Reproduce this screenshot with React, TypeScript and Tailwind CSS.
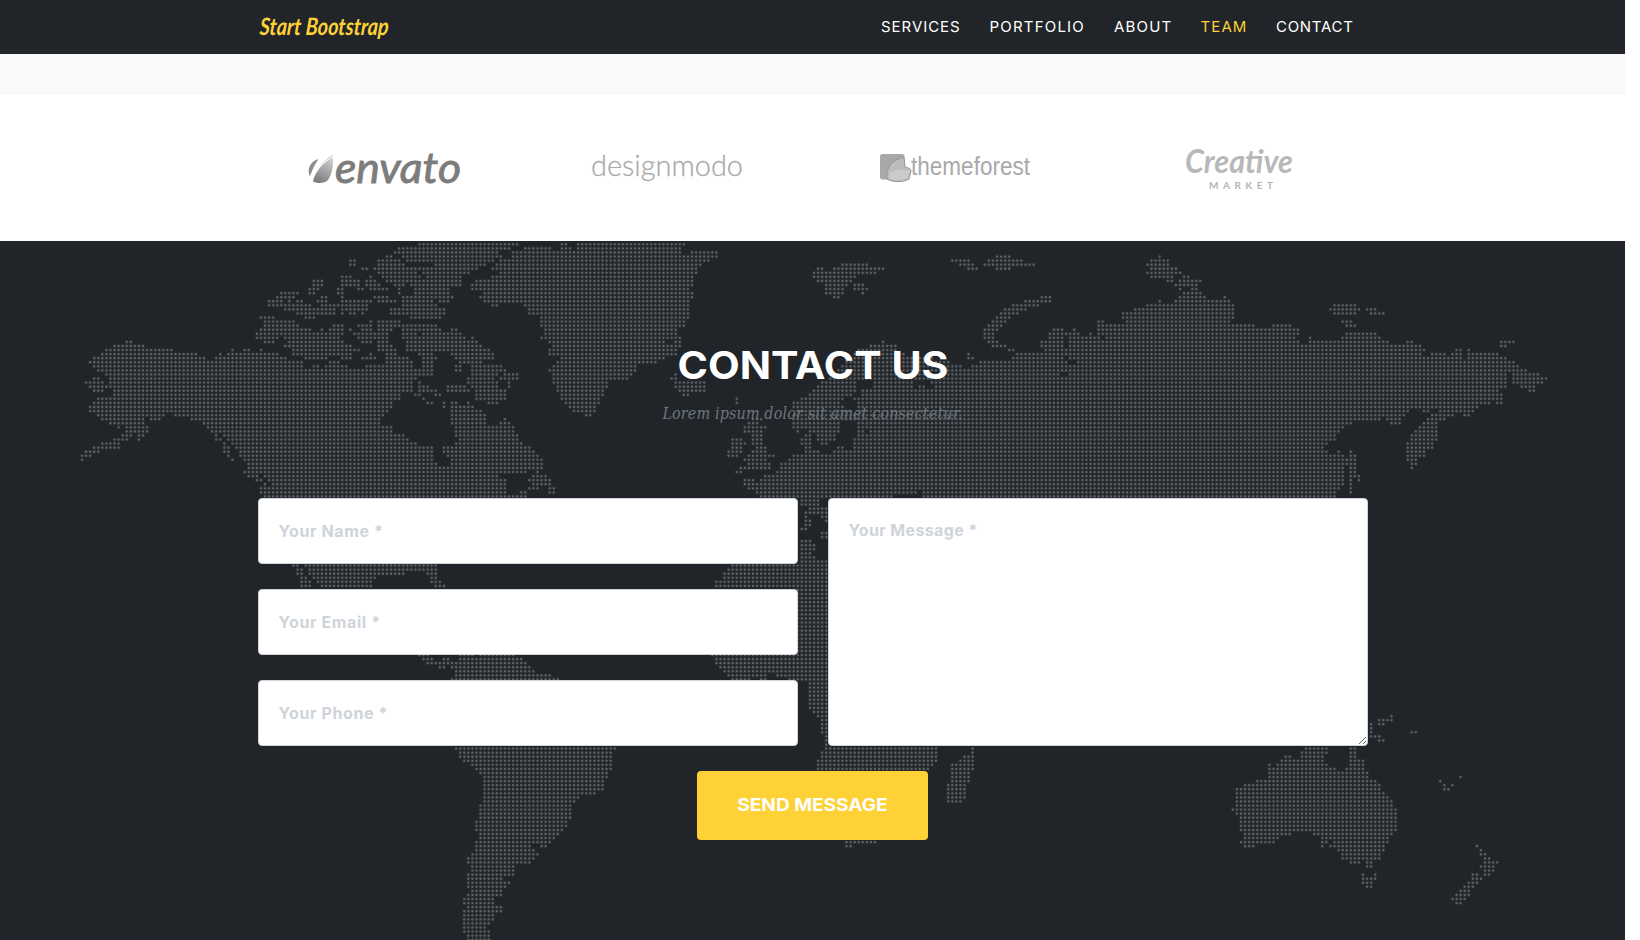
import React from "react";

/* Dotted world map: each region lists "row start-end start-end ..." in thirds of a pixel from its left edge. */
const PITCH = 61 / 15;
const REGIONS: { left: number; rows: string }[] = [
  {
    left: 60,
    rows: `0 1078-1375;1 1015-1350;2 1003-1315;3 978-990 1027-1325;4 871-883 954-1015 1040-1300;5 871-883 954-1030 1125-1275
6 907-919 944-1250;7 954-1070 1090-1230;8 846-871 932 966-1080 1100-1205;9 761-785 846-895 920-944 980-1205
10 761-785 846-895 920-960 1005-1030 1060-1205;11 749-773 834-846 895-907 932-980 1017 1065-1165
12 663-712 749-761 834-846 1017 1065-1165;13 651-700 785-797 846 944-980 1027-1175
14 627-663 688 712-724 773-797 846-930 954-1010 1027-1115 1140-1165;15 627-700 712-749 785-835 846-915 1027-1100 1115-1130
16 675-749 761-822 846-920 993-1150;17 712-822 846 871-883 907 993-1150;18 602-640 737-761 1054-1140
19 614-700 932 956-1020;20 614-712 822-846 895-932 956-1020 1027-1130;21 602-749 785 810-846 871 907-932 956-990 1027-1140 1175-1187
22 590-749 761-846 883-980 1027-1070 1090-1205;23 590-651 675-834 895-944 956-975 1027-1215 1236
24 200-212 614-640 688-846 907-930 956-980 1040-1248;25 163-248 675-871 956-990 1040-1260
26 139-335 517 553-565 602 700-895 956-1005 1040-1150 1170-1285;27 127-410 480 505-650 700-871 932 980-1005 1075-1115 1175-1295
28 102-432 468-675 737-797 846-871 907-944 980-1045 1088-1125 1187-1295;29 90-445 456-725 810-834 980-1055 1088-1115 1200-1260
30 102-725 761-773 797-860 920-940 956-1055 1088-1115 1187-1200 1236-1325;31 114-1070 1080-1115 1187-1200 1236-1335
32 139-1070 1080-1115 1236-1312 1335-1372;33 102-114 150-1070 1225-1300 1322-1372;34 78-130 150-1057 1078 1225-1285 1300-1312 1345
35 90-1057 1078-1103 1163-1210 1236-1312 1345;36 102-127 163-1057 1078-1130 1163-1230 1248-1335
37 163-1020 1066-1078 1127-1140 1248-1335;38 114-1020 1090 1248-1335;39 102-995 1103-1115 1151 1175-1187 1225 1285-1310
40 90-995 1151 1175-1240;41 90-980 1175-1262;42 114-310 345-970 1175-1275;43 127-248 272-300 395-960 1175-1275 1335
44 151-248 432-960 1175-1275 1322-1350;45 175 200-262 444-990 1187-1360;46 200-262 456-990 1187-1360
47 187-210 236-248 468 493-1030 1187-1372;48 163-205 236 468-480 505-1045 1200-1372;49 127-180 493 517-1070 1187-1385
50 102-180 493-505 529-1115 1151-1410;51 78-115 493-505 541-1115 1151-1420;52 66-90 505 541-1115 1163-1435
53 66 517 553-1115 1175-1445;54 565-1127 1175-1445;55 565-1140 1151 1163-1445;56 553-1400 1432;57 565-590 614-1312 1420-1457
58 590-602 626-1335 1410-1470;59 614 638-1335 1420-1470;60 602-1335 1408-1432 1470-1480;61 602-1335 1385-1397 1470-1480;62 614-1335 1350-1397
79 697-716 733-1131;80 709-724 747-1131;81 709-721 747-1034 1103-1131;82 724-735 758-945 1114-1131;83 721-749 773-936 1114-1143
84 721-749 785-936 1128-1154;101 1076-1103 1200-1235 1258-1361;102 1091-1114 1148-1166 1200-1387;103 1103-1166 1177-1395
104 1137-1151 1175-1409;105 1186-1421;106 1186-1470;107 1175-1495`,
  },
  {
    left: 400,
    rows: `0 482-495 530-850;1 370-455 482-510 530-845;2 345-845 873-955;3 345-865 873-945;4 300-930;5 285-905;6 275-890;7 297-885;8 275-870
9 225-870;10 213-870;11 213-865;12 250-880;13 238-880;14 250-865;15 275-290 370-865;16 382-865;17 385-865;18 420-865;19 420-855
20 420-850;21 433-832;22 433-832;23 420-432 445-835;24 445-795 830-840;25 457-800 820-840;26 445-830;27 445-830;28 480-795
29 470-770;30 457-710;31 445-700;32 457-690 825;33 457-640 650-675 813-830;34 457-625 825-915;35 470-625 825-915;36 470-612 837-915
37 480-610 850-865;38 482-600 1010;39 495-590 1010;40 505-585;41 518-585;42 555-575;43 1058-1085;44 1045-1070;45 1033-1097
46 1033-1085;47 1058-1085;48 997-1020 1058-1085;49 997-1033 1058-1085;50 997-1020 1070-1097;51 985-1020 1058-1097;52 985-1010 1045-1120
53 1033-1097 1170-1200;54 1045-1110 1160-1200;55 1020-1110 1140-1200;56 1010-1020 1130-1200;57 1095-1200;58 1033-1058 1085-1200
59 1033-1200;60 1045-1200;61 1070-1200;62 1082-1200`,
  },
  {
    left: 780,
    rows: `3 650-690 1138;4 517-567 625-730 1113-1163;5 185-265 540-580 612-765 1100-1163;6 110-125 160-310 565-590 650-690 1113-1187
7 98-290 1100-1200;8 98-230 1113-1175 1210-1225;9 112-215 1163-1175 1200-1262;10 137-200 220-250 1187-1250;11 137-190 220-262 1200 1236-1250
12 137-190 248 1212-1262;13 160-175 785-812 1200-1275 1335;14 737-812 1138 1187-1350;15 700-775 1100-1350;16 675-740 1065-1350
17 663-712 1030-1350;18 650-690 1030-1350;19 638-678 956-968 1040-1350;20 626-665 956-1350;21 614-655 820-850 883 956-1350
22 614-640 808-860 871-895 932 956-1350;23 614-640 808-850 871-956 980-1350;24 310 626-655 785-850 871-1350
25 272-350 638-680 785-850 871-1350;26 235-350 688-700 797-1350;27 220-370 565 710-860 871-905 920-1350;28 210-450 565-577 700-850 871-1350
29 200-510 602-860 890-1350;30 190-545 577-865 883-1350;31 180-540 553-865 883-1350;32 160-840 870-1350;33 150-1350
34 125-230 280-400 460-1350;35 112-230 280-390 418-430 465-1350;36 100-230 250-1350;37 88-215 245-1350;38 63-185 220-1350
39 40-180 235-1350;40 40-185 235-1350;41 50-210 235-1350;42 40-230 240-1350;43 40-1350;44 40-180 235-1350;45 40-180 235-1350
46 50 88-180 235-245 270-1350;47 75-90 110-165 235-1350;48 63-90 112-165 225-1350;49 63-90 125-140 220-1350;50 75-90 175-190 220-1350
51 75-115 160-1350;52 40-1350;53 28-1350;54 0-1350;55 0-1350;56 0-1350;57 0-1350;58 0-1350;59 0-1350;60 0-1350;61 0-405 430-1350;62 0-335 430-1350
63 60-118;64 60-118;65 85-144;66 75-144;67 75 125-144;68 75-90 137;69 75-90;70 62-75;71 125-144;72 125-144;73 60-95;74 60-105;75 60-105;76 60-95;77 60-105
78 60-144;79 -147-144;80 -160-144;81 -171-144;82 -171-144;83 -194-144;84 -194-144;85 54-144;86 54-144;87 54-144;88 54-144;89 54-144;90 54-144
91 54-144;92 54-144;93 54-144;94 54-144;95 54-144;96 54-144;97 54-144;98 54-144;99 54-144;100 54-144;101 -206-144;102 -194-144;103 -194-144
104 -183-144;105 -171-144;106 -156--41 -13-144;107 -147--91 -53--41 27-144;108 85-144;109 85-144;110 85-144;111 85-144;112 85-144;113 85-144;114 85-144
115 100-144;116 110-144;117 125-144;118 125-144;119 125-144;120 125-144;121 137;122 137;123 137
124 137-470 577;125 125-470 577;126 125-470 553-577;127 112-470 541-577;128 112-460 517-577;129 112-445 517-577;130 517-567;131 517-567
132 517-567;133 505-555;134 505-555;135 505-555;136 505-555;137 505-541;147 200-290;148 200-212`,
  },
  {
    left: 1180,
    rows: `14 0-150;15 0-160 462-528;16 0-160 450-540 560-590;17 0-160 462-528 575-612;18 0-125 147-160;19 0-105 123-150 487-515
20 0-220 280-330 500-528;21 0-355;22 0-355 500-590;23 0-345 390 487-600;24 0-355 390-625 683-700 963-1003;25 0-725 963-975
26 0-735 830-842 867;27 0-725 755-797 818-842 867-955;28 0-840 867-980;29 0-1003;30 0-1015;31 0-1040;32 0-980 1000-1075;33 0-980 1000-1098
34 0-980 1000-1088;35 0-980 1025-1065;36 0-955 1050-1062;37 0-968;38 0-968;39 0-930 955-968;40 0-895;41 0-685 733-745 780-880
42 0-675 757-820 855-870;43 0-600 625-660 745-795;44 0-515 635-660 733-770;45 0-490 720-770;46 0-478 708-770;47 0-465 695-770
48 0-465 695-770;49 0-440 683-760;50 0-430 683-760;51 0-440 475 515 683-735;52 0-490 515-525 683-735;53 0-500 515-525 683-710
54 0-500 515-525 695-710;55 0-490 515-525 697;56 0-490 515-525;57 0-490 515-540;58 0-490 515 540;59 0-490 515;60 0-478 515;61 0-465 515;62 0-465
116 635;117 598-635;118 575 598-610;119 575;120 575 695-707;121 575-598;122 598-610
124 378-440 512-525;125 366-440 512-525;126 317-330 366-430 512-525;127 305-430 512-550;128 268 292-440 512-550;129 268-465 500-550
130 268-562;131 268-562 842;132 232-585 782;133 195-600 793 818;134 170-600 793-805;135 170-610;136 170-622;137 170-635;138 170-635
139 158-648;140 170-648;141 183-648;142 183-648;143 183-648;144 183-648;145 195-330 402-635;146 195-292 427-625;147 183-285 427-440 465-622
148 195-220 427 452-612 891;149 475-612 903;150 487-600 903-915;151 487-600 915-928;152 512-540 562-575 915-952;153 562-575 903-940
154 915-940;155 550 585 880-892 915-928;156 550-585 880-903;157 550-575 867-892;158 562-575 855-880;159 842-867;160 830-867;161 818-855;162 830-842`,
  },
  {
    left: 400,
    rows: `124 167-645;125 180-635;126 180-635;127 192-635;128 215-635;129 228-635;130 240-620;131 252-620;132 252-610;133 252-610;134 252-610
135 252-585;136 252-535;137 252-525;138 240-512;139 240-512;140 240-512;141 240-512;142 228-500;143 228-500;144 228-487;145 240-475
146 240-463;147 228-450;148 228-390 424-436;149 228-402;150 215-412;151 204-402;152 204-390;153 215-340;154 215-340;155 204-340
156 204-305;157 204-330;158 204-315;159 215-305;160 204-305;161 192-280;162 192-280;163 204-305;164 192-305;165 192-280;166 192-280
167 192-268;168 192-256;169 192-268;170 204-268;171 204-268`,
  },
];

function buildMap(): string {
  const dots = new Set<string>();
  for (const { left, rows } of REGIONS) {
    for (const line of rows.split(/[;\n]/)) {
      const [row, ...spans] = line.trim().split(" ");
      for (const span of spans) {
        const m = /^(-?\d+)(?:-(-?\d+))?$/.exec(span);
        if (!m) continue;
        const col = (v: number) => Math.round((left + v / 3 - 82) / PITCH);
        const from = col(Number(m[1]));
        const to = col(Number(m[2] ?? m[1]));
        for (let c = from; c <= to; c++) {
          dots.add(`M${(82 + c * PITCH).toFixed(2)} ${(3.33 + Number(row) * PITCH).toFixed(2)}h0`);
        }
      }
    }
  }
  return [...dots].join("");
}

const MAP_PATH = buildMap();

function WorldMap() {
  return (
    <svg className="absolute inset-0 h-full w-full" viewBox="0 0 1625 699" fill="none" strokeLinecap="round">
      <path d={MAP_PATH} stroke="#5b6062" strokeOpacity="0.2" strokeWidth="4" />
      <path d={MAP_PATH} stroke="#5f6365" strokeWidth="2.3" />
    </svg>
  );
}

const NAV = [
  { label: "SERVICES", box: "w-[79px] tracking-[0.95px]", active: false },
  { label: "PORTFOLIO", box: "w-[95px] tracking-[1.2px]", active: false },
  { label: "ABOUT", box: "w-[57px] tracking-[1.2px]", active: false },
  { label: "TEAM", box: "w-[46px] tracking-[1.1px]", active: true },
  { label: "CONTACT", box: "w-[78px] tracking-[0.7px]", active: false },
];

const SANS = "font-['Inter',sans-serif]";

function Navbar() {
  return (
    <nav className="flex h-[54px] items-center justify-between bg-[#212529] pl-[258px] pr-[271px]">
      <svg width="134" height="34" viewBox="0 0 134 34" className="overflow-visible">
        <text x="1" y="25.5" textLength="129" lengthAdjust="spacingAndGlyphs" transform="skewX(-4) translate(2 0)" className="fill-[#fed136] font-['Lato',sans-serif] text-[24px] font-bold italic">
          Start Bootstrap
        </text>
      </svg>
      <ul className="flex gap-[29.5px]">
        {NAV.map((n) => (
          <li key={n.label} className={n.box}>
            <a className={`block whitespace-nowrap text-[15px] leading-6 ${n.active ? "text-[#fed136]" : "text-white"}`}>{n.label}</a>
          </li>
        ))}
      </ul>
    </nav>
  );
}

function Clients() {
  return (
    <section className="grid h-[146px] grid-cols-4 items-center bg-white px-[242px]">
      <svg width="200" height="74" viewBox="0 -12 200 74" className="ml-[43px]">
        <defs>
          <linearGradient id="leaf" x1="0.7" y1="0" x2="0.4" y2="1">
            <stop offset="0" stopColor="#d8d8d8" />
            <stop offset="0.5" stopColor="#a8a8a8" />
            <stop offset="1" stopColor="#7d7d7d" />
          </linearGradient>
        </defs>
        <path d="M25 33.500C22 27 24 19 33.500 16C30 21 27 27 25 33.500Z" fill="#8d8d8d" />
        <path d="M47.500 11.500C49 22 47 31 43 37C39 41 32 40.500 28 38.500C29 30 37 19 47.500 11.500Z" fill="url(#leaf)" />
        <path d="M27 38C31 27 38 19 48 14" stroke="#fff" strokeWidth="1" fill="none" />
        <text x="50" y="39.500" textLength="126" lengthAdjust="spacingAndGlyphs" stroke="#7c7c7c" strokeWidth="0.9" className="fill-[#7c7c7c] font-['Lato',sans-serif] text-[43px] italic">
          envato
        </text>
      </svg>
      <svg width="200" height="74" viewBox="0 -12 200 74" className="ml-[43px]">
        <text x="21" y="32.500" textLength="152" lengthAdjust="spacingAndGlyphs" stroke="#aaaaaa" strokeWidth="0.3" className="fill-[#aaaaaa] font-['Lato',sans-serif] text-[30px] font-light">
          designmodo
        </text>
      </svg>
      <svg width="200" height="74" viewBox="0 -12 200 74" className="ml-[43px]">
        <rect x="24" y="11" width="24.500" height="25.500" rx="2.500" fill="#a8a8a8" />
        <path d="M31 36C29.500 25 36 16.500 48 14.500L49 24C52 25 55 25 55 28L53 36C47 39.500 37 39.500 31 36Z" fill="#bdbdbd" stroke="#979797" strokeWidth="1" />
        <path d="M33 35C32 29 38 26 47 27.500C51 28 54 26 54 28L52 35C45 38 37 38 33 35Z" fill="#cbcbcb" />
        <text x="55" y="32" textLength="119" lengthAdjust="spacingAndGlyphs" className="fill-[#a9a9a9] font-['Liberation_Sans',sans-serif] text-[25px]">
          themeforest
        </text>
      </svg>
      <svg width="200" height="74" viewBox="0 -12 200 74" className="ml-[43px]">
        <text x="44" y="30" textLength="108" lengthAdjust="spacingAndGlyphs" className="fill-[#b8b8b8] font-['Lato',sans-serif] text-[33px] font-bold italic">
          Creative
        </text>
        <text x="68" y="45.500" textLength="64" className="fill-[#b5b5b5] font-['Lato',sans-serif] text-[10px] font-bold">
          MARKET
        </text>
      </svg>
    </section>
  );
}

const FIELD =
  "block w-full rounded border border-[#ced4da] bg-white px-5 text-[16px] font-bold text-[#495057] outline-none placeholder:text-[#ced4da] placeholder:opacity-100";

function Contact() {
  return (
    <section className="relative h-[699px] overflow-hidden bg-[#212529]">
      <WorldMap />
      <div className="relative mx-auto w-[1110px] pt-[94px]">
        <header className="text-center">
          <h2 className="scale-x-[1.068] text-[38.5px] font-bold leading-[60px] text-white">CONTACT US</h2>
          <p className="mt-[7px] font-['DejaVu_Serif',serif] text-[16px] italic leading-6 tracking-[0.12px] text-[#6c757d] [font-stretch:condensed]">
            Lorem ipsum dolor sit amet consectetur.
          </p>
        </header>
        <form className="mt-[72px]">
          <div className="grid grid-cols-2 gap-[30px]">
            <div className="flex flex-col gap-[25px]">
              <input className={`${FIELD} h-[66px] tracking-[0.6px]`} placeholder="Your Name *" />
              <input className={`${FIELD} h-[66px] tracking-[0.6px]`} placeholder="Your Email *" />
              <input className={`${FIELD} h-[66px] tracking-[0.6px]`} placeholder="Your Phone *" />
            </div>
            <textarea className={`${FIELD} h-[248px] pb-5 pt-[19px] leading-6 tracking-[0.35px]`} placeholder="Your Message *" />
          </div>
          <button type="button" className="mx-auto mt-[25px] block h-[69px] w-[231px] rounded bg-[#fed136] text-[17.6px] font-bold text-white">
            <span className="block scale-x-[1.085]">SEND MESSAGE</span>
          </button>
        </form>
      </div>
    </section>
  );
}

export default function App() {
  return (
    <div className={`h-[940px] overflow-hidden bg-white pr-[15px] ${SANS}`}>
      <Navbar />
      <div className="h-[41px] bg-[#f8f9fb]" />
      <Clients />
      <Contact />
    </div>
  );
}
